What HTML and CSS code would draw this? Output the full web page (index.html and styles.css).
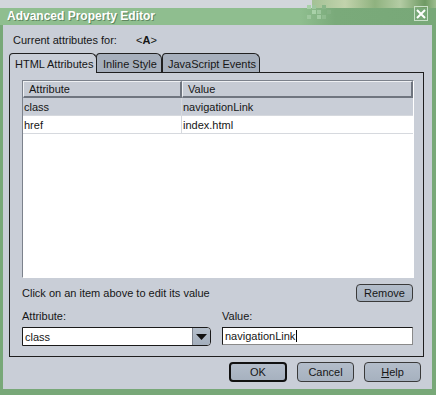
FILE: index.html
```html
<!DOCTYPE html>
<html lang="en">

<head>
    <meta charset="UTF-8">
    <title>Advanced Property Editor</title>
    <link rel="stylesheet" href="styles.css">
</head>

<body>
    <div class="pantalla">
        <div class="escritorio"></div>

        <div class="ventana">
            <div class="titulo">
                <span class="titulo-texto">Advanced Property Editor</span>
                <svg class="cuadros" width="26" height="17" viewBox="0 0 26 17">
                    <rect x="2" y="0" width="4" height="4" fill="#a9d1a9" />
                    <rect x="7" y="0" width="4" height="4" fill="#9ec79e" />
                    <rect x="7" y="5" width="4" height="4" fill="#a9d1a9" />
                    <rect x="12" y="5" width="4" height="4" fill="#9ec79e" />
                    <rect x="2" y="10" width="4" height="4" fill="#9ec79e" />
                    <rect x="12" y="10" width="4" height="4" fill="#a2cba2" />
                    <rect x="17" y="10" width="4" height="4" fill="#8fbb8f" />
                    <rect x="17" y="0" width="4" height="4" fill="#88b588" />
                    <rect x="22" y="5" width="4" height="4" fill="#84b184" />
                </svg>
                <button class="cerrar" type="button">
                    <svg width="12" height="12" viewBox="0 0 12 12">
                        <path d="M2 2 L10 10 M10 2 L2 10" stroke="#ffffff" stroke-width="2" fill="none" />
                    </svg>
                </button>
            </div>

            <div class="cliente">
                <div class="actual">
                    <span class="actual-label">Current attributes for:</span>
                    <span>&lt;<b>A</b>&gt;</span>
                </div>

                <div class="pestanas">
                    <div class="pestana activa">HTML Attributes</div>
                    <div class="pestana estilo">Inline Style</div>
                    <div class="pestana eventos">JavaScript Events</div>
                </div>

                <div class="panel">
                    <div class="tabla">
                        <div class="fila encabezado">
                            <div class="celda">Attribute</div>
                            <div class="celda">Value</div>
                        </div>
                        <div class="fila seleccionada">
                            <div class="celda">class</div>
                            <div class="celda">navigationLink</div>
                        </div>
                        <div class="fila">
                            <div class="celda">href</div>
                            <div class="celda">index.html</div>
                        </div>
                    </div>

                    <div class="ayuda">
                        <span>Click on an item above to edit its value</span>
                        <button class="boton quitar" type="button">Remove</button>
                    </div>

                    <div class="campos">
                        <div class="campo atributo">
                            <label for="atributo">Attribute:</label>
                            <div class="combo">
                                <span class="combo-valor" id="atributo">class</span>
                                <span class="combo-flecha">
                                    <svg width="11" height="6" viewBox="0 0 11 6">
                                        <path d="M0 0 L11 0 L5.5 6 Z" fill="#111111" />
                                    </svg>
                                </span>
                            </div>
                        </div>
                        <div class="campo valor">
                            <label for="valor">Value:</label>
                            <div class="entrada" id="valor">navigationLink<span class="cursor"></span></div>
                        </div>
                    </div>
                </div>

                <div class="botones">
                    <button class="boton principal" type="button">OK</button>
                    <button class="boton" type="button">Cancel</button>
                    <button class="boton" type="button"><u>H</u>elp</button>
                </div>
            </div>
        </div>
    </div>
</body>

</html>
```

FILE: styles.css
```css
body {
    margin: 0;
    font-family: 'Liberation Sans', Arial, sans-serif;
    font-size: 11px;
    color: #161616;
}

.pantalla {
    width: 436px;
    height: 395px;
    display: flex;
    flex-direction: column;
    overflow: hidden;
}

.escritorio {
    height: 8px;
    background: linear-gradient(to right, #d2d6db 0, #d2d6db 312px, #a3c195 312px, #c2d3ac 345px, #8fb27f 375px, #b4cca4 400px, #6f9a64 425px, #9dbd8e 436px);
}

.ventana {
    flex: 1;
    display: flex;
    flex-direction: column;
    background-color: #78a878;
}

.titulo {
    height: 17px;
    display: flex;
    align-items: center;
    padding: 0 8px 0 7px;
    background: linear-gradient(to right, #8fbe8f 0, #8fbe8f 300px, #7aaa7a 335px, #78a878 436px);
}

.titulo-texto {
    flex: 1;
    padding-bottom: 2px;
    font-size: 12px;
    font-weight: bold;
    color: #ffffff;
    text-shadow: 1px 1px 0 #5f875f;
}

.cuadros {
    margin-right: 83px;
    align-self: flex-start;
    margin-top: -3px;
}

.cerrar {
    width: 14px;
    height: 15px;
    padding: 0;
    align-self: flex-start;
    margin-top: -2px;
    display: flex;
    align-items: center;
    justify-content: center;
    background: none;
    border: 1px solid #c9e0c9;
}

.cliente {
    flex: 1;
    margin: 0 4px 6px 3px;
    padding: 8px 8px 0 6px;
    display: flex;
    flex-direction: column;
    background-color: #c9ced7;
}

.actual {
    height: 14px;
    display: flex;
    align-items: center;
    padding-left: 4px;
}

.actual-label {
    width: 123px;
}

.pestanas {
    margin-top: 6px;
    height: 19px;
    display: flex;
    align-items: stretch;
}

.pestana {
    box-sizing: border-box;
    display: flex;
    align-items: center;
    padding: 1px 0 0 4px;
    border: 1px solid #202020;
    border-bottom: none;
    border-radius: 4px 6px 0 0;
    background-color: #a6afbc;
}

.pestana.activa {
    width: 88px;
    padding-left: 5px;
    background-color: #c9ced7;
    position: relative;
    z-index: 1;
    margin-bottom: -1px;
    height: 20px;
}

.pestana.estilo {
    width: 66px;
    margin-left: -1px;
    padding-left: 6px;
}

.pestana.eventos {
    width: 98px;
    margin-left: 0;
    padding-left: 5px;
}

.panel {
    height: 285px;
    box-sizing: border-box;
    border: 1px solid #1e1e1e;
    padding: 7px 9px 0 12px;
    display: flex;
    flex-direction: column;
}

.tabla {
    height: 198px;
    box-sizing: border-box;
    border-top: 1px solid #7c828c;
    border-left: 1px solid #7c828c;
    border-right: 1px solid #ffffff;
    border-bottom: 1px solid #ffffff;
    background-color: #ffffff;
}

.fila {
    display: grid;
    grid-template-columns: 159px 1fr;
    height: 18px;
    box-sizing: border-box;
    border-bottom: 1px solid #d6d9de;
}

.fila .celda {
    display: flex;
    align-items: center;
    padding-left: 1px;
    border-right: 1px solid #d6d9de;
}

.fila .celda:last-child {
    border-right: none;
}

.fila.encabezado {
    height: 17px;
    border-bottom: none;
    background-color: #c6cbd4;
}

.fila.encabezado .celda {
    box-sizing: border-box;
    padding-left: 5px;
    border-top: 1px solid #eef0f3;
    border-left: 1px solid #eef0f3;
    border-right: 2px solid #6f757f;
    border-bottom: 2px solid #6f757f;
}

.fila.encabezado .celda:last-child {
    border-right: 2px solid #6f757f;
}

.fila.seleccionada {
    background-color: #c9ced7;
}

.ayuda {
    margin-top: 6px;
    height: 18px;
    display: flex;
    align-items: center;
    justify-content: space-between;
    padding-right: 1px;
}

.boton {
    box-sizing: border-box;
    width: 57px;
    height: 20px;
    padding: 0;
    font-family: 'Liberation Sans', Arial, sans-serif;
    font-size: 11px;
    color: #161616;
    background: linear-gradient(to bottom, #b3bdca, #a6b1bf);
    border: 1px solid #3a3a3a;
    border-radius: 4px;
}

.boton.quitar {
    height: 18px;
}

.boton.principal {
    width: 58px;
    border: 2px solid #111111;
}

.campos {
    margin-top: 7px;
    display: flex;
    gap: 11px;
    padding-right: 1px;
}

.campo {
    display: flex;
    flex-direction: column;
    gap: 4px;
}

.campo label {
    height: 14px;
    line-height: 14px;
}

.campo.atributo {
    width: 189px;
}

.campo.valor {
    flex: 1;
}

.combo {
    height: 19px;
    box-sizing: border-box;
    display: flex;
    border: 1px solid #1a1a1a;
    border-radius: 0 4px 4px 0;
    background-color: #ffffff;
    overflow: hidden;
}

.combo-valor {
    flex: 1;
    display: flex;
    align-items: center;
    padding-left: 2px;
}

.combo-flecha {
    width: 17px;
    display: flex;
    align-items: center;
    justify-content: center;
    border-left: 1px solid #7b818b;
    background: linear-gradient(to bottom, #b5bfcb, #a3aebc);
}

.entrada {
    height: 18px;
    box-sizing: border-box;
    display: flex;
    align-items: center;
    padding-left: 2px;
    border: 1px solid #1a1a1a;
    border-right-color: #8a8a8a;
    border-bottom-color: #8a8a8a;
    background-color: #ffffff;
}

.cursor {
    width: 1px;
    height: 12px;
    margin-left: 1px;
    background-color: #000000;
}

.botones {
    margin-top: 5px;
    display: flex;
    justify-content: flex-end;
    gap: 10px;
    padding-right: 3px;
}
```
